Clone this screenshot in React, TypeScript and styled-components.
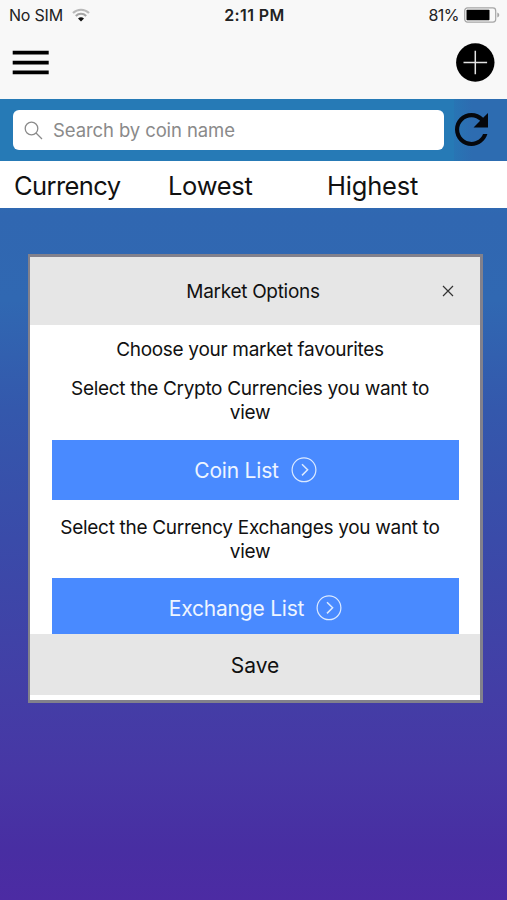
import React from "react";
import styled, { createGlobalStyle } from "styled-components";

const Global = createGlobalStyle`
  * { box-sizing: border-box; }
  body { margin: 0; font-family: Inter, "Liberation Sans", sans-serif; color: #111; }
  button { font: inherit; color: inherit; border: 0; padding: 0; background: none; }
  svg { display: block; flex: none; }
`;

const Screen = styled.div`
  width: 507px;
  height: 900px;
  display: flex;
  flex-direction: column;
  overflow: hidden;
  background: linear-gradient(180deg, #267ab6 0, #267ab6 130px, #3067b1 215px, #3068b2 300px, #3458ac 410px, #3a4ba9 540px, #433ea6 690px, #4737a5 770px, #482ea2 850px, #4c2ba3 900px);
`;

const Label = styled.span<{ $size: number; $spacing?: number; $weight?: number }>`
  font-size: ${(p) => p.$size}px;
  letter-spacing: ${(p) => p.$spacing ?? 0}px;
  font-weight: ${(p) => p.$weight ?? 400};
  white-space: nowrap;
`;

const Header = styled.header`
  height: 99px;
  flex: none;
  background: #f8f8f8;
`;

const StatusBar = styled.div`
  height: 30px;
  display: grid;
  grid-template-columns: 1fr auto 1fr;
  align-items: center;
  padding: 0 7px 0 9px;
  color: #222;
`;

const StatusGroup = styled.div<{ $end?: boolean }>`
  display: flex;
  align-items: center;
  justify-content: ${(p) => (p.$end ? "flex-end" : "flex-start")};
  gap: ${(p) => (p.$end ? 5 : 9)}px;
`;

const NavBar = styled.div`
  height: 65px;
  display: flex;
  align-items: center;
  justify-content: space-between;
  padding: 0 12px;
`;

const SearchBar = styled.div`
  height: 62px;
  flex: none;
  display: flex;
  align-items: stretch;
  padding-left: 13px;
  background: #267ab6;
`;

const SearchField = styled.div`
  width: 431px;
  height: 40px;
  margin-top: 11px;
  border-radius: 6px;
  background: #fff;
  color: #8a8a8a;
  display: flex;
  align-items: center;
  gap: 10px;
  padding: 0 11px;
`;

const Refresh = styled.button`
  width: 53px;
  margin-left: auto;
  background: linear-gradient(90deg, #2875b4, #2d6cb1 18px);
  display: flex;
  padding: 14px 0 0 1px;
`;

const Columns = styled.div`
  height: 47px;
  flex: none;
  display: grid;
  grid-template-columns: 154px 159px 1fr;
  align-items: center;
  padding: 1px 0 0 14px;
  background: #fff;
`;

const Modal = styled.section`
  width: 455px;
  height: 449px;
  margin: 46px 0 0 28px;
  border: 2.5px solid #82818c;
  border-width: 3px 3px 3px 2px;
  background: #fff;
  display: flex;
  flex-direction: column;
`;

const ModalHeader = styled.div`
  height: 68px;
  flex: none;
  display: grid;
  grid-template-columns: 60px 1fr 64px;
  align-items: center;
  justify-items: center;
  background: #e6e6e6;
`;

const ModalBody = styled.div`
  flex: 1;
  min-height: 0;
  overflow: hidden;
  padding: 13px 21px 0 22px;
  text-align: center;
`;

const Text = styled.p<{ $gap: number }>`
  margin: 0 0 ${(p) => p.$gap}px;
  padding-right: 11px;
  display: flex;
  flex-direction: column;
  align-items: center;
  line-height: 24px;
`;

const ListButton = styled.button`
  width: 407px;
  height: 60px;
  margin-bottom: 16px;
  display: flex;
  align-items: center;
  justify-content: center;
  gap: 12px;
  background: #498aff;
  color: #eef5ff;
`;

const Save = styled.button`
  height: 61px;
  flex: none;
  margin-bottom: 5px;
  background: #e6e6e6;
  padding-top: 2px;
`;

const Wifi = () => (
  <svg width="18" height="14" viewBox="0 0 18 14" fill="none">
    <path d="M1 5A11.5 11.5 0 0 1 17 5" stroke="#b9b9b9" strokeWidth="2.2" />
    <path d="M3.8 8A7.4 7.4 0 0 1 14.2 8" stroke="#a5a5a5" strokeWidth="2" />
    <path d="M9 13.5 6 10.6Q9 8 12 10.6Z" fill="#111" />
  </svg>
);

const Battery = () => (
  <svg width="36" height="16" viewBox="0 0 36 16" fill="none">
    <rect x="0.7" y="0.9" width="31" height="14.2" rx="2.8" stroke="#a5a5a5" strokeWidth="1.2" />
    <rect x="2.5" y="2.8" width="23" height="10.4" rx=".7" fill="#000" />
    <path d="M33.3 5.5q2 .6 2 2.5t-2 2.5Z" fill="#a5a5a5" />
  </svg>
);

const Menu = () => (
  <svg width="37" height="26" viewBox="0 0 37 26">
    <path d="M.7 .8h36v3.8H.7zM.7 10.7h36v3.8H.7zM.7 20.5h36v3.8H.7z" fill="#000" />
  </svg>
);

const Add = () => (
  <svg width="39" height="39" viewBox="0 0 39 39">
    <circle cx="19.3" cy="19.5" r="19.2" fill="#000" />
    <path d="M19.3 7.7v23.6M7.5 19.5h23.6" stroke="#e4e4e4" strokeWidth="1.5" />
  </svg>
);

const Magnifier = () => (
  <svg width="19" height="19" viewBox="0 0 19 19" fill="none" stroke="#8a8a8a" strokeWidth="1.3">
    <circle cx="7.5" cy="7.5" r="6.3" />
    <path d="m12 12 6 6" />
  </svg>
);

const RefreshIcon = () => (
  <svg width="33" height="33" viewBox="80 80 352 352">
    <path
      fill="#05070c"
      d="M256 388c-72.597 0-132-59.405-132-132 0-72.601 59.403-132 132-132 36.3 0 69.299 15.4 92.406 39.601L278 234h154V80l-51.698 51.702C348.406 99.798 304.406 80 256 80c-96.797 0-176 79.203-176 176s78.094 176 176 176c81.045 0 148.287-54.134 169.401-128H378.85c-18.745 49.561-67.138 84-122.85 84z"
    />
  </svg>
);

const Close = () => (
  <svg width="12" height="12" viewBox="0 0 12 12" stroke="#333" strokeWidth="1.2">
    <path d="m1 1 10 10M11 1 1 11" />
  </svg>
);

const ArrowCircle = () => (
  <svg width="26" height="26" viewBox="0 0 26 26" fill="none" stroke="#dceaff">
    <circle cx="13" cy="12.8" r="11.9" strokeWidth="1.2" />
    <path d="m11 7.2 5.6 5.6-5.6 5.6" strokeWidth="1.5" />
  </svg>
);

export default function App() {
  return (
    <>
      <Global />
      <Screen>
        <Header>
          <StatusBar>
            <StatusGroup>
              <Label $size={16} $spacing={-0.2}>No SIM</Label>
              <Wifi />
            </StatusGroup>
            <Label $size={16} $weight={600} $spacing={0.4}>2:11 PM</Label>
            <StatusGroup $end>
              <Label $size={16} $spacing={-0.5}>81%</Label>
              <Battery />
            </StatusGroup>
          </StatusBar>
          <NavBar>
            <Menu />
            <Add />
          </NavBar>
        </Header>
        <SearchBar>
          <SearchField>
            <Magnifier />
            <Label $size={18.5} $spacing={-0.1}>Search by coin name</Label>
          </SearchField>
          <Refresh aria-label="Refresh"><RefreshIcon /></Refresh>
        </SearchBar>
        <Columns>
          <Label $size={25.5} $spacing={-0.6}>Currency</Label>
          <Label $size={25.5} $spacing={-0.3}>Lowest</Label>
          <Label $size={25.5} $spacing={-0.2}>Highest</Label>
        </Columns>
        <Modal>
          <ModalHeader>
            <span />
            <Label $size={19} $spacing={-0.3}>Market Options</Label>
            <Close />
          </ModalHeader>
          <ModalBody>
            <Text $gap={15}><Label $size={19} $spacing={-0.3}>Choose your market favourites</Label></Text>
            <Text $gap={15}>
              <Label $size={19} $spacing={-0.3}>Select the Crypto Currencies you want to</Label>
              <Label $size={19} $spacing={-0.3}>view</Label>
            </Text>
            <ListButton><Label $size={21} $spacing={-0.2}>Coin List</Label><ArrowCircle /></ListButton>
            <Text $gap={14}>
              <Label $size={19} $spacing={-0.3}>Select the Currency Exchanges you want to</Label>
              <Label $size={19} $spacing={-0.3}>view</Label>
            </Text>
            <ListButton><Label $size={21} $spacing={-0.2}>Exchange List</Label><ArrowCircle /></ListButton>
          </ModalBody>
          <Save><Label $size={21}>Save</Label></Save>
        </Modal>
      </Screen>
    </>
  );
}
